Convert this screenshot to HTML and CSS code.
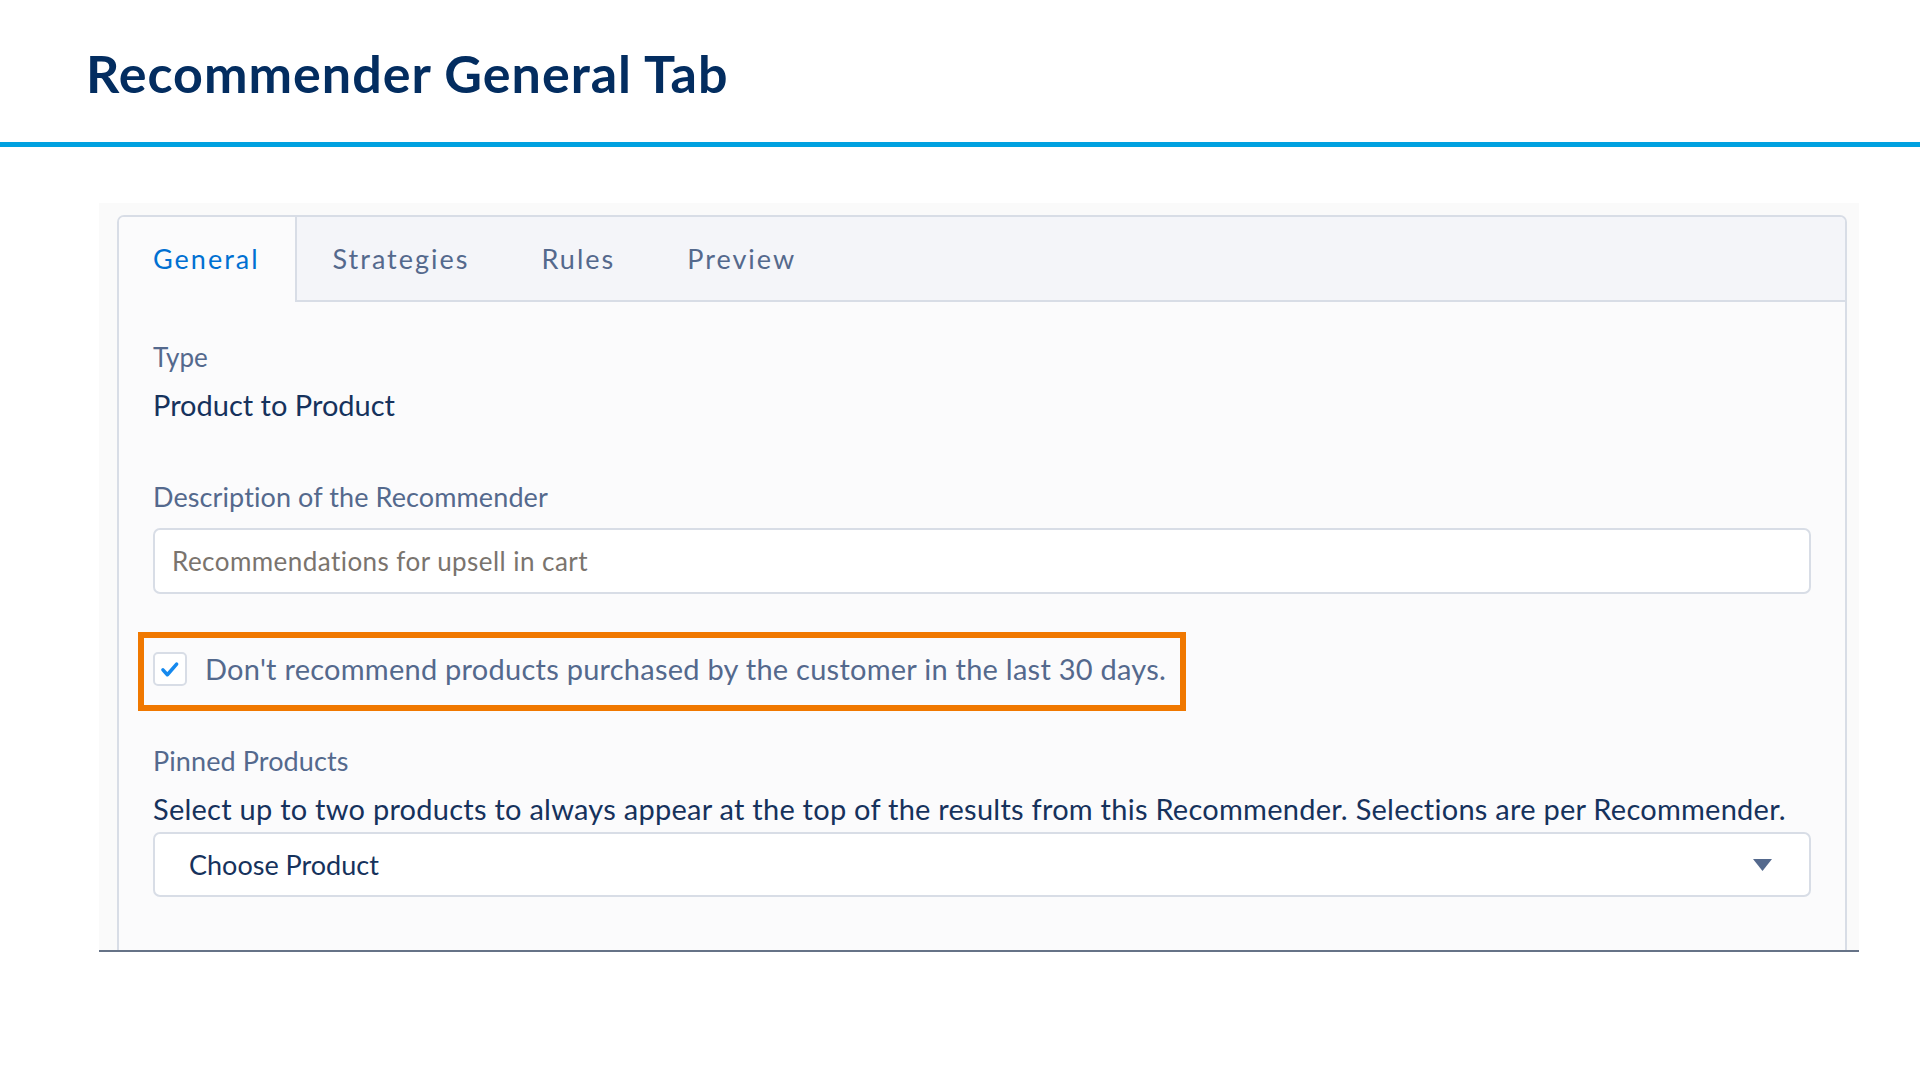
FILE: index.html
```html
<!DOCTYPE html>
<html lang="en">
<head>
<meta charset="utf-8">
<title>Recommender General Tab</title>
<link rel="stylesheet" href="styles.css">
</head>
<body>
  <header class="slide-header">
    <h1 class="slide-title">Recommender General Tab</h1>
  </header>

  <section class="frame">
    <div class="card">
      <nav class="tabs">
        <div class="tab tab-active">General</div>
        <div class="tab">Strategies</div>
        <div class="tab">Rules</div>
        <div class="tab">Preview</div>
      </nav>

      <div class="card-body">
        <div class="label label-type">Type</div>
        <div class="value">Product to Product</div>

        <div class="label label-desc">Description of the Recommender</div>
        <div class="input">
          <span class="placeholder">Recommendations for upsell in cart</span>
        </div>

        <div class="check-row">
          <span class="checkbox">
            <svg viewBox="0 0 34 34" width="30" height="30" aria-hidden="true">
              <polyline points="9,18 14,23.5 24.5,11.5" fill="none" stroke="#1589ee" stroke-width="4" stroke-linecap="round" stroke-linejoin="round"/>
            </svg>
          </span>
          <span class="check-label">Don't recommend products purchased by the customer in the last 30 days.</span>
          <span class="highlight"></span>
        </div>

        <div class="label label-pinned">Pinned Products</div>
        <div class="help">Select up to two products to always appear at the top of the results from this Recommender. Selections are per Recommender.</div>
        <div class="select">
          <span class="select-text">Choose Product</span>
          <svg class="caret" viewBox="0 0 19 12" width="19" height="12" aria-hidden="true">
            <polygon points="0,0 19,0 9.5,12" fill="#54698d"/>
          </svg>
        </div>
      </div>
    </div>
  </section>
</body>
</html>
```

FILE: styles.css
```css
html, body {
  margin: 0;
  padding: 0;
  background: #ffffff;
}

body {
  width: 1920px;
  height: 1080px;
  overflow: hidden;
  font-family: Lato, "Open Sans", sans-serif;
}

.slide-header {
  padding: 43px 0 39px 86px;
  border-bottom: 5px solid #00a1e0;
}

.slide-title {
  margin: 0;
  font-family: Lato, "Open Sans", sans-serif;
  font-weight: 700;
  font-size: 52px;
  line-height: 60px;
  letter-spacing: 1px;
  color: #032d60;
}

.frame {
  margin: 56px 0 0 99px;
  width: 1760px;
  height: 749px;
  box-sizing: border-box;
  padding: 12px 12px 0 18px;
  background: #fafafa;
  border-bottom: 2px solid #667387;
  display: flex;
  flex-direction: column;
  overflow: hidden;
}

.card {
  flex: 1;
  border: 2px solid #d8dde6;
  border-bottom: none;
  border-radius: 7px 7px 0 0;
  background: #fbfbfc;
  overflow: hidden;
}

.tabs {
  display: flex;
  height: 83px;
  background: #f4f5f9;
  border-bottom: 2px solid #d8dde6;
}

.tab {
  padding: 0 36px 0 36px;
  line-height: 83px;
  font-size: 27px;
  letter-spacing: 2px;
  color: #54698d;
}

.tab-active {
  padding-left: 34px;
  padding-right: 35px;
  padding-bottom: 2px;
  margin-bottom: -2px;
  background: #fbfbfc;
  border-right: 2px solid #d8dde6;
  color: #0070d2;
}

.card-body {
  padding: 39px 34px 0 34px;
}

.label {
  font-size: 26px;
  line-height: 32px;
  color: #54698d;
}

.value {
  margin-top: 14px;
  font-size: 29px;
  line-height: 36px;
  color: #16325c;
}

.label-desc {
  margin-top: 57px;
  font-size: 27px;
  line-height: 34px;
  letter-spacing: 0.1px;
}

.input {
  margin-top: 14px;
  height: 66px;
  box-sizing: border-box;
  border: 2px solid #d8dde6;
  border-radius: 7px;
  background: #ffffff;
  display: flex;
  align-items: center;
  padding-left: 17px;
}

.placeholder {
  font-size: 26px;
  line-height: 32px;
  letter-spacing: 0.45px;
  color: #7a746e;
}

.check-row {
  position: relative;
  margin-top: 58px;
  height: 34px;
  width: fit-content;
  display: flex;
  align-items: center;
  gap: 18px;
}

.checkbox {
  width: 34px;
  height: 34px;
  box-sizing: border-box;
  border: 2px solid #d8dde6;
  border-radius: 5px;
  background: #ffffff;
  display: flex;
  align-items: center;
  justify-content: center;
}

.check-label {
  font-size: 29px;
  line-height: 34px;
  letter-spacing: 0.25px;
  color: #54698d;
}

.highlight {
  position: absolute;
  top: -20px;
  left: -15px;
  right: -20px;
  bottom: -25px;
  border: 6px solid #f07800;
  pointer-events: none;
}

.label-pinned {
  margin-top: 59px;
  font-size: 27px;
  letter-spacing: 0.1px;
}

.help {
  margin-top: 15px;
  font-size: 29px;
  line-height: 34px;
  letter-spacing: 0.25px;
  color: #16325c;
}

.select {
  margin-top: 6px;
  height: 65px;
  box-sizing: border-box;
  border: 2px solid #d8dde6;
  border-radius: 7px;
  background: #ffffff;
  display: flex;
  align-items: center;
  justify-content: space-between;
  padding: 0 37px 0 34px;
}

.select-text {
  font-size: 27px;
  line-height: 34px;
  color: #16325c;
}

.caret {
  display: block;
}
```
